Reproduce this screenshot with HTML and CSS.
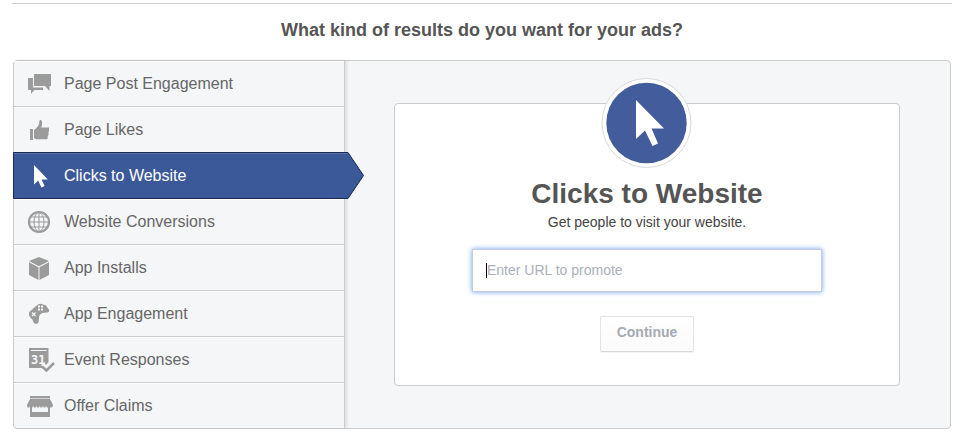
FILE: index.html
```html
<!doctype html>
<html>
 <head>
  <meta charset="UTF-8">
  <title>Create an Ad</title>
  <link rel="stylesheet" href="styles.css">
 </head>
 <body>
  <div class="page">
	<h2 class="question">What kind of results do you want for your ads?</h2>
	<div class="panel">
	  <ul class="nav">
		<li>
		  <svg class="icon" width="28" height="29" viewBox="0 0 28 29"><path d="M8 5h17v12h-1.500v5l-4.500-5H8z"/><path d="M2 9h5v9.500h10V21H8.500L5 25v-4H2z"/></svg>
		  <span>Page Post Engagement</span>
		</li>
		<li>
		  <svg class="icon" width="28" height="29" viewBox="0 0 28 29"><path d="M4 14h3v11H4zM8 15l3.500-3 1.500-3 .500-3.500c.3-1 2.500-.5 2.500 1 .3 2 0 4-.7 6H23v3.500l-.5 1v3l-.8 1v2.500l-1 .8H10l-2-1z"/></svg>
		  <span>Page Likes</span>
		</li>
		<li class="active">
		  <svg class="arrow" width="352" height="47" viewBox="0 0 352 47"><path d="M.5.5H335L350.500 23.500 335 46.500H.5z" fill="#3b5998" stroke="#162a54"/><path d="M1 1.500H335" stroke="#5870a8"/></svg>
		  <svg class="icon" width="28" height="29" viewBox="0 0 28 29"><path d="M8 4v19.500l4.200-4 3.200 7 3.200-1.500-3-6.500h6.200z"/></svg>
		  <span>Clicks to Website</span>
		</li>
		<li>
		  <svg class="icon line" width="28" height="29" viewBox="0 0 28 29"><circle cx="13" cy="15" r="10" stroke-width="2.200"/><ellipse cx="13" cy="15" rx="5" ry="9.500"/><path d="M13 5v20M3 15h20M5 10h16M5 20h16"/></svg>
		  <span>Website Conversions</span>
		</li>
		<li>
		  <svg class="icon" width="28" height="29" viewBox="0 0 28 29"><path d="M13 4l10 4-10 5.200L3 8zM3 9.300l9.500 5V27L3 22zM23 9.300l-9.500 5V27l9.500-5z"/></svg>
		  <span>App Installs</span>
		</li>
		<li>
		  <svg class="icon" width="28" height="29" viewBox="0 0 28 29"><path d="M11 6.500c1-1.800 4-2.500 6-1 2 .2 3.500 1 4 2.500 1.800 2 2.500 3.300 2 4.500-1.500 1.800-4 .7-6.500 1.500-3 1-3.500 3-3.500 5.500 0 3-1 5.500-3 5.500s-3-2.500-3.500-4.500C4 18.500 2.500 16.500 3 14c.3-1.800 1.500-2 2.500-3 2.500-2 3.500-3.500 5.500-4.500z"/><path class="cut" d="M12 6.500h2v2h-2zM15 6.500h2v2h-2zM12 9.500h2v2h-2zM15 9.500h2v2h-2z"/><path class="mark" d="M6 13.500l3.500 3.500M9.500 13.500L6 17" stroke-width="1.200"/></svg>
		  <span>App Engagement</span>
		</li>
		<li>
		  <svg class="icon" width="28" height="29" viewBox="0 0 28 29"><path d="M3 3h19.500v14l-2.500 3-2-2-3 2 2.500 3H3z"/><path class="mark" d="M5 5.500h15.500"/><text class="cut day" x="5" y="19">31</text><path d="M16 21.500l4.500 4 7.500-7.500" fill="none" stroke="#9b9b9b" stroke-width="2.500"/></svg>
		  <span>Event Responses</span>
		</li>
		<li>
		  <svg class="icon" width="28" height="29" viewBox="0 0 28 29"><path d="M4 5h20v2H4z"/><path d="M4 7h20v1H4z" opacity="0.4"/><path d="M4 8h20l3 6v1.500H1V14z"/><path d="M4 15h2v6h16v-6h2v11H4z"/><path d="M1.500 15.500h25" fill="none" stroke="#9b9b9b" stroke-width="2" stroke-dasharray="2 1.200"/></svg>
		  <span>Offer Claims</span>
		</li>
	  </ul>
	  <div class="content">
		<div class="card">
		  <svg class="badge" width="90" height="90" viewBox="0 0 90 90"><circle cx="45.500" cy="45" r="44.500" fill="#fff" stroke="#d8d9db"/><circle cx="45.500" cy="45" r="40.200" fill="#435c9c"/><path d="M35 22v39l9-8.500L51.500 68l5.500-2.500L50.500 50.500H63z" fill="#fff"/></svg>
		  <h1 class="title">Clicks to Website</h1>
		  <p class="subtitle">Get people to visit your website.</p>
		  <div class="url"><i class="caret"></i><span>Enter URL to promote</span></div>
		  <button class="continue">Continue</button>
		</div>
	  </div>
	</div>
  </div>
 </body>
</html>
```
FILE: styles.css
```css
	*{
		margin:0;
		padding:0;
		box-sizing:border-box;
	}
	body{
		background-color:#fff;
		font-family:"Liberation Sans", Arial, sans-serif;
		color:#555;
	}
	ul{
		list-style:none;
	}
	.page{
		width:940px;
		margin:3px 0 0 12px;
		border-top:1px solid #ccc;
	}
	.question{
		padding-top:15px;
		height:56px;
		line-height:22px;
		font-size:18px;
		text-align:center;
	}
	.panel{
		display:flex;
		width:938px;
		height:369px;
		margin-left:1px;
		border:1px solid #ccc;
		border-radius:4px;
		background-color:#f5f6f8;
	}
	.nav{
		width:331px;
		border-right:1px solid #ccc;
		box-shadow:2px 0 3px rgba(0,0,0,0.1);
	}
	.nav>li{
		display:flex;
		align-items:center;
		height:46px;
		padding-left:12px;
		border-bottom:1px solid #ccc;
		box-shadow:inset 0 1px #fff;
		font-size:16px;
		color:#666;
	}
	.nav>li:last-child{
		height:45px;
		border-bottom:0;
	}
	.nav>li.active{
		position:relative;
		color:#fff;
	}
	.nav span{
		position:relative;
		margin-left:10px;
	}
	.arrow{
		position:absolute;
		left:-1px;
		top:-1px;
	}
	.icon{
		flex:none;
		fill:#9b9b9b;
		overflow:visible;
	}
	.active .icon{
		position:relative;
		fill:#fff;
	}
	.line{
		fill:none;
		stroke:#9b9b9b;
	}
	.cut{
		fill:#f5f6f8;
	}
	.day{
		font:bold 12px "DejaVu Sans Mono", monospace;
	}
	.mark{
		fill:none;
		stroke:#f5f6f8;
	}
	.content{
		flex:1;
		padding:42px 50px 0 49px;
	}
	.card{
		display:flex;
		flex-direction:column;
		align-items:center;
		height:283px;
		border:1px solid #ccc;
		border-radius:4px;
		background-color:#fff;
	}
	.badge{
		margin:-26px 2px 0 0;
		overflow:visible;
	}
	.title{
		margin-top:9px;
		line-height:34px;
		font-size:28px;
	}
	.subtitle{
		margin-top:2px;
		line-height:18px;
		font-size:14px;
		color:#444;
	}
	.url{
		display:flex;
		align-items:center;
		width:350px;
		height:43px;
		margin-top:18px;
		padding:0 0 1px 13px;
		border:1px solid #c5cbd8;
		box-shadow:0 0 5px #6f9ff5;
		font-size:14px;
		color:#aaafb9;
	}
	.caret{
		width:1px;
		height:15px;
		background-color:#000;
	}
	.continue{
		width:94px;
		height:36px;
		margin-top:24px;
		padding-bottom:4px;
		border:1px solid #e2e3e5;
		border-bottom-color:#d6d7d9;
		border-radius:2px;
		background:linear-gradient(#fff, #fafafa);
		box-shadow:0 1px 1px rgba(0,0,0,0.05);
		font:bold 14px "Liberation Sans", Arial, sans-serif;
		color:#a6aab2;
	}
```
